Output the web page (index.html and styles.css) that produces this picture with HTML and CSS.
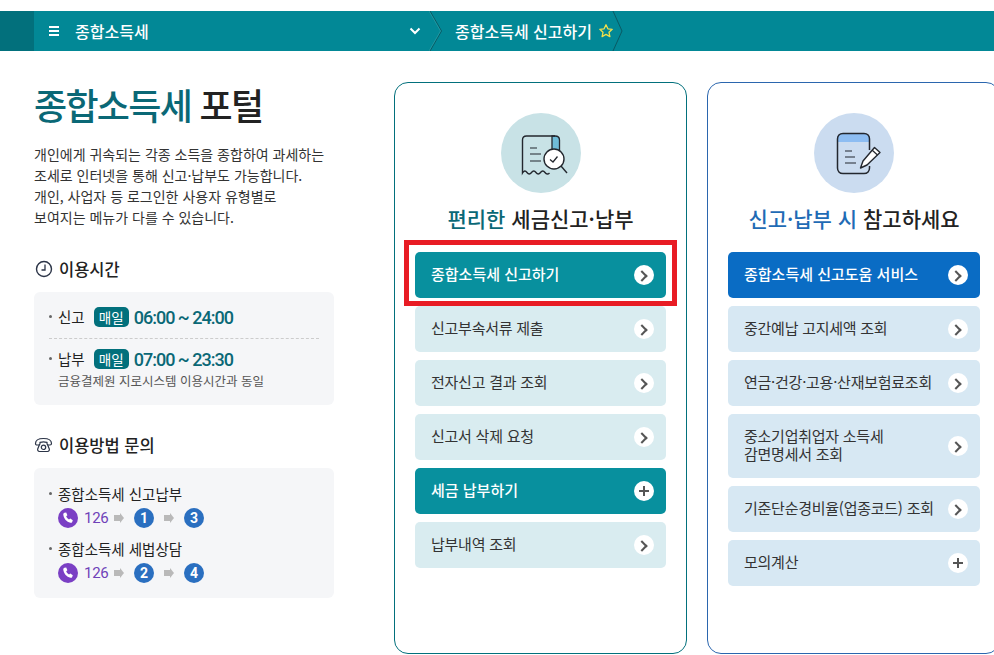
FILE: index.html
```html
<!DOCTYPE html>
<html lang="ko">
<head>
    <meta charset="UTF-8">
    <meta name="viewport" content="width=device-width, initial-scale=1.0">
    <title>종합소득세 포털</title>
    <link rel="stylesheet" href="styles.css">
</head>
<body>

    <header class="topbar">
        <div class="topbar-side"></div>
        <div class="topbar-menu">
            <span class="hamburger"><i></i><i></i><i></i></span>
            <span class="topbar-name">종합소득세</span>
            <svg class="topbar-chevron" width="12" height="8" viewBox="0 0 12 8"><path d="M1.500 1.500 6 6l4.500-4.500" fill="none" stroke="#fff" stroke-width="2"/></svg>
        </div>
        <svg class="crumb-sep" width="14" height="40" viewBox="0 0 14 40"><path d="M1 0 12.500 20 1 40" fill="none" stroke="#0a5a64" stroke-width="1"/><path d="M0 0 11.500 20 0 40" fill="none" stroke="#3fa7ae" stroke-width="1" opacity=".5"/></svg>
        <div class="crumb">
            <span>종합소득세 신고하기</span>
            <svg width="16" height="16" viewBox="0 0 16 16"><path d="M8 1.800l1.900 4 4.300.5-3.200 3 .9 4.300L8 11.400l-3.900 2.200.9-4.300-3.200-3 4.300-.5z" fill="none" stroke="#f3e04a" stroke-width="1.300" stroke-linejoin="round"/></svg>
        </div>
        <svg class="crumb-sep" width="14" height="40" viewBox="0 0 14 40"><path d="M1 0 10 20 1 40" fill="none" stroke="#0a5a64" stroke-width="1"/></svg>
    </header>

    <main class="content">
        <section class="intro">
            <h1><em>종합소득세</em> 포털</h1>
            <p class="intro-text">개인에게 귀속되는 각종 소득을 종합하여 과세하는<br>조세로 인터넷을 통해 신고·납부도 가능합니다.<br>개인, 사업자 등 로그인한 사용자 유형별로<br>보여지는 메뉴가 다를 수 있습니다.</p>

            <h2 class="info-title">
                <svg class="clock" width="18" height="18" viewBox="0 0 18 18"><circle cx="9" cy="9" r="7.500" fill="none" stroke="#2b3447" stroke-width="1.400"/><path d="M10 4.500V10H6.500" fill="none" stroke="#2b3447" stroke-width="1.300"/></svg>
                이용시간
            </h2>
            <div class="info-box hours">
                <div class="hours-row">
                    <div class="hours-line"><span class="dot">신고</span><span class="tag">매일</span><span class="time">06:00 ~ 24:00</span></div>
                </div>
                <div class="hours-row second">
                    <div class="hours-line"><span class="dot">납부</span><span class="tag">매일</span><span class="time">07:00 ~ 23:30</span></div>
                    <p class="hours-note">금융결제원 지로시스템 이용시간과 동일</p>
                </div>
            </div>

            <h2 class="info-title phone-title">
                <svg width="19" height="16" viewBox="0 0 18 16"><path d="M1 6.500C1 3 4.500 1.500 9 1.500s8 1.500 8 5c0 1-.6 1.500-1.500 1.500h-1.800c-.8 0-1.200-.6-1.200-1.400V5.400C11 5 10 4.800 9 4.800s-2 .2-3.500.6v1.200C5.500 7.400 5.100 8 4.300 8H2.500C1.600 8 1 7.500 1 6.500z" fill="none" stroke="#2b3447" stroke-width="1.200"/><path d="M5 7.500 3.200 12c-.3 1 .3 2.500 1.800 2.500h8c1.500 0 2.100-1.500 1.800-2.500L13 7.500" fill="none" stroke="#2b3447" stroke-width="1.200"/><circle cx="9" cy="10.300" r="2.200" fill="none" stroke="#2b3447" stroke-width="1.200"/></svg>
                이용방법 문의
            </h2>
            <div class="info-box contact">
                <p class="dot">종합소득세 신고납부</p>
                <div class="steps">
                    <span class="call"><svg width="12" height="12" viewBox="0 0 12 12"><path d="M2.500.8 4.200.4l1.200 2.800-1.200 1c.5 1.300 1.300 2.300 2.800 3.300l1.300-1 2.500 1.700-.6 1.700c-.3.700-1 1-1.800.8C4.500 9.700 1.900 6.700 1.300 2.700c-.1-.9.400-1.700 1.200-1.900z" fill="#fff"/></svg></span>
                    <span class="num-126">126</span>
                    <span class="arrow"></span>
                    <span class="num">1</span>
                    <span class="arrow"></span>
                    <span class="num">3</span>
                </div>
                <p class="dot">종합소득세 세법상담</p>
                <div class="steps">
                    <span class="call"><svg width="12" height="12" viewBox="0 0 12 12"><path d="M2.500.8 4.200.4l1.200 2.800-1.200 1c.5 1.300 1.300 2.300 2.800 3.300l1.300-1 2.500 1.700-.6 1.700c-.3.700-1 1-1.800.8C4.500 9.700 1.900 6.700 1.300 2.700c-.1-.9.400-1.700 1.200-1.900z" fill="#fff"/></svg></span>
                    <span class="num-126">126</span>
                    <span class="arrow"></span>
                    <span class="num">2</span>
                    <span class="arrow"></span>
                    <span class="num">4</span>
                </div>
            </div>
        </section>

        <section class="card card-teal">
            <div class="card-icon">
                <svg width="80" height="80" viewBox="0 0 80 80">
                    <path d="M51 23h3c3 0 4.500 1.500 4.500 4v14H51z" fill="#6fbcd8" stroke="#23272e" stroke-width="1.300"/>
                    <path d="M54 23H25.500c-2.500 0-4 1.500-4 4v33c1.500-2.500 3-2.500 4.500-.5s3 2 4.500 0 3-2 4.500 0 3 2 4.500 0 3-2 4.500 0 3 2 4.500.5" fill="none" stroke="#23272e" stroke-width="1.400"/>
                    <path d="M29 35h7M29 41h11M29 48h11" stroke="#23272e" stroke-width="1.200"/>
                    <circle cx="53" cy="46" r="10" fill="#fff" stroke="#23272e" stroke-width="1.400"/>
                    <path d="M49 46.500l3 2.500 4.500-5.500" fill="none" stroke="#23272e" stroke-width="1.300"/>
                    <path d="M60 53l6 7" stroke="#23272e" stroke-width="1.400"/>
                </svg>
            </div>
            <h2 class="card-title"><em>편리한</em> 세금신고·납부</h2>
            <ul class="link-list">
                <li class="marked"><a class="link-btn primary" href="#">종합소득세 신고하기<span class="go"></span></a></li>
                <li><a class="link-btn" href="#">신고부속서류 제출<span class="go"></span></a></li>
                <li><a class="link-btn" href="#">전자신고 결과 조회<span class="go"></span></a></li>
                <li><a class="link-btn" href="#">신고서 삭제 요청<span class="go"></span></a></li>
                <li><a class="link-btn primary" href="#">세금 납부하기<span class="go plus"></span></a></li>
                <li><a class="link-btn" href="#">납부내역 조회<span class="go"></span></a></li>
            </ul>
        </section>

        <section class="card card-blue">
            <div class="card-icon">
                <svg width="80" height="80" viewBox="0 0 80 80">
                    <path d="M23.500 29v-3c0-3 2-5.500 5.500-5.500h21c3.500 0 5.500 2.500 5.500 5.500v3z" fill="#8dbdf2"/>
                    <path d="M55.500 37V26c0-3-2-5.500-5.500-5.500H29c-3.500 0-5.500 2.500-5.500 5.500v29c0 3 2 5.500 5.500 5.500h21c3.500 0 5.500-2.500 5.500-5.500v-2" fill="none" stroke="#23272e" stroke-width="1.500"/>
                    <path d="M31 38h7M31 44h10M31 50h11" stroke="#23272e" stroke-width="1.200"/>
                    <path d="M60.500 34.500l5.500 5L53 52l-6.500 3 2.500-7z" fill="#fff" stroke="#23272e" stroke-width="1.400" stroke-linejoin="round"/>
                    <path d="M58 37l5.500 5" stroke="#23272e" stroke-width="1.200"/>
                </svg>
            </div>
            <h2 class="card-title"><em>신고·납부 시</em> 참고하세요</h2>
            <ul class="link-list">
                <li><a class="link-btn strong" href="#">종합소득세 신고도움 서비스<span class="go"></span></a></li>
                <li><a class="link-btn" href="#">중간예납 고지세액 조회<span class="go"></span></a></li>
                <li><a class="link-btn" href="#">연금·건강·고용·산재보험료조회<span class="go"></span></a></li>
                <li><a class="link-btn tall" href="#">중소기업취업자 소득세<br>감면명세서 조회<span class="go"></span></a></li>
                <li><a class="link-btn" href="#">기준단순경비율(업종코드) 조회<span class="go"></span></a></li>
                <li><a class="link-btn" href="#">모의계산<span class="go plus"></span></a></li>
            </ul>
        </section>
    </main>

</body>
</html>
```

FILE: styles.css
```css
* {
    box-sizing: border-box;
}
html, body {
    overflow: hidden;
}
body {
    margin: 0;
    height: 655px;
    padding-top: 11px;
    font-family: "Noto Sans CJK KR", "Noto Sans", sans-serif;
    color: #222;
    background-color: #fff;
}
h1, h2, p, ul {
    margin: 0;
    padding: 0;
}
em {
    font-style: normal;
}
li {
    list-style: none;
}
a {
    text-decoration: none;
}

/* top bar */
.topbar {
    display: flex;
    align-items: center;
    height: 40px;
    background-color: #028896;
    color: #fff;
    font-size: 16px;
    font-weight: 500;
}
.topbar-side {
    width: 34px;
    height: 100%;
    background-color: #02707c;
}
.topbar-menu {
    display: flex;
    align-items: center;
    width: 395px;
    padding-left: 15px;
}
.hamburger {
    display: flex;
    flex-direction: column;
    gap: 2px;
    width: 10px;
    margin-right: 16px;
}
.hamburger i {
    height: 2px;
    background-color: #fff;
}
.topbar-name {
    flex: 1;
}
.topbar-chevron {
    margin-right: 8px;
}
.crumb {
    display: flex;
    align-items: center;
    gap: 6px;
    margin-left: 12px;
    margin-right: -2px;
}

/* left column */
.content {
    display: flex;
    align-items: flex-start;
    padding: 31px 0 0 34px;
}
.intro {
    flex: none;
    width: 300px;
    margin-right: 60px;
}
h1 {
    font-size: 36px;
    font-weight: 500;
    line-height: 44px;
    letter-spacing: -1.700px;
}
h1 em {
    color: #0a6876;
}
.intro-text {
    margin-top: 18px;
    font-size: 14px;
    line-height: 21px;
    color: #333;
}
.info-title {
    display: flex;
    align-items: center;
    gap: 6px;
    margin-top: 29px;
    font-size: 16.500px;
    font-weight: 500;
    line-height: 24px;
    color: #222;
}
.phone-title {
    margin-top: 28px;
}
.clock {
    margin-left: 1px;
}
.info-box {
    margin-top: 11px;
    border-radius: 6px;
    background-color: #f5f6f8;
    padding: 0 15px;
}
.hours {
    height: 113px;
}
.hours-row {
    padding-top: 13px;
    height: 47px;
    border-bottom: 1px dashed #ccc;
}
.hours-row.second {
    height: auto;
    padding-top: 8px;
    border-bottom: 0;
}
.hours-line {
    display: flex;
    align-items: center;
    height: 24px;
}
.dot {
    position: relative;
    padding-left: 9px;
    font-size: 14.500px;
    line-height: 20px;
    color: #222;
}
.dot::before {
    content: "";
    position: absolute;
    left: 0;
    top: 8px;
    width: 3px;
    height: 3px;
    border-radius: 50%;
    background-color: #666;
}
.tag {
    display: inline-block;
    width: 35px;
    height: 20px;
    margin-left: 9px;
    margin-right: 5px;
    border-radius: 5px;
    background-color: #02707c;
    color: #fff;
    font-size: 13.500px;
    line-height: 20px;
    text-align: center;
}
.time {
    font-family: "Roboto", sans-serif;
    font-size: 18px;
    font-weight: 500;
    color: #0a6876;
    letter-spacing: -1px;
}
.hours-note {
    padding-left: 9px;
    font-size: 12.500px;
    line-height: 20px;
    color: #555;
}
.contact {
    height: 130px;
    padding-top: 16px;
}
.steps {
    display: flex;
    align-items: center;
    height: 20px;
    margin: 4px 0 11px 9px;
}
.call, .num {
    display: flex;
    align-items: center;
    justify-content: center;
    width: 20px;
    height: 20px;
    border-radius: 50%;
}
.call {
    background-color: #7a3fc4;
}
.num-126 {
    width: 24px;
    margin-left: 6px;
    font-family: "Roboto", sans-serif;
    font-size: 15px;
    color: #6f42b8;
    letter-spacing: -.3px;
}
.num {
    background-color: #2a6fc0;
    color: #fff;
    font-family: "Roboto", sans-serif;
    font-size: 14px;
    font-weight: 700;
}
.arrow {
    position: relative;
    width: 6px;
    height: 6px;
    margin: 0 14px 0 6px;
    background-color: #b9b9b9;
}
.num + .arrow {
    margin-left: 10px;
}
.arrow::after {
    content: "";
    position: absolute;
    left: 6px;
    top: -2px;
    border-left: 4px solid #b9b9b9;
    border-top: 5px solid transparent;
    border-bottom: 5px solid transparent;
}

/* cards */
.card {
    flex: none;
    width: 293px;
    height: 572px;
    padding: 30px 20px 0;
    border: 1px solid #02707c;
    border-radius: 14px;
}
.card-blue {
    margin-left: 20px;
    padding-right: 19px;
    border-color: #2b66ae;
}
.card-icon {
    width: 80px;
    height: 80px;
    margin: 0 auto;
    border-radius: 50%;
    background-color: #c8e2e6;
}
.card-blue .card-icon {
    background-color: #cbdcf0;
}
.card-title {
    margin-top: 10px;
    font-size: 21px;
    font-weight: 500;
    line-height: 30px;
    text-align: center;
}
.card-teal .card-title em {
    color: #0a6876;
}
.card-blue .card-title em {
    color: #1f6bb5;
}
.link-list {
    display: flex;
    flex-direction: column;
    gap: 8px;
    margin-top: 19px;
}
.link-list li {
    position: relative;
}
.marked::after {
    content: "";
    position: absolute;
    left: -11px;
    right: -11px;
    top: -12px;
    bottom: -8px;
    border: 5px solid #e81c24;
}
.link-btn {
    position: relative;
    display: flex;
    align-items: center;
    min-height: 46px;
    padding: 0 36px 2px 16px;
    border-radius: 5px;
    background-color: #d9ecf0;
    color: #333;
    font-size: 15px;
    line-height: 18px;
    letter-spacing: -.25px;
    white-space: nowrap;
}
.card-blue .link-btn {
    background-color: #d7e8f3;
}
.link-btn.tall {
    display: block;
    height: 64px;
    padding-top: 13px;
}
.link-btn.primary {
    background-color: #08909e;
    color: #fff;
    font-weight: 500;
    letter-spacing: 0;
}
.card-blue .link-btn.strong {
    background-color: #0a6cc4;
    color: #fff;
    font-weight: 500;
    letter-spacing: 0;
}
.go {
    position: absolute;
    right: 12px;
    top: 50%;
    width: 20px;
    height: 20px;
    margin-top: -10px;
    border-radius: 50%;
    background-color: #fff;
}
.go::after {
    content: "";
    position: absolute;
    left: 4px;
    top: 7px;
    width: 6px;
    height: 6px;
    border-top: 2px solid #555;
    border-right: 2px solid #555;
    transform: rotate(45deg);
}
.go.plus::before, .go.plus::after {
    content: "";
    position: absolute;
    left: 5px;
    top: 9px;
    width: 10px;
    height: 2px;
    border: 0;
    background-color: #555;
    transform: none;
}
.go.plus::after {
    transform: rotate(90deg);
}
```
